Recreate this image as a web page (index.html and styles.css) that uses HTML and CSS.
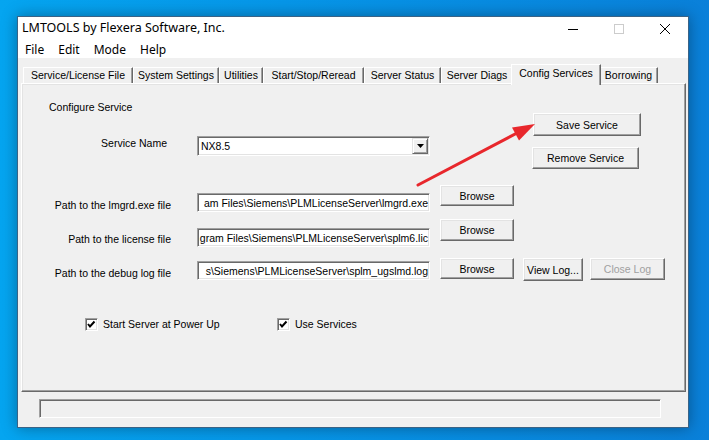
FILE: index.html
```html
<!DOCTYPE html>
<html>
<head>
<meta charset="utf-8">
<title>LMTOOLS</title>
<link rel="stylesheet" href="styles.css">
</head>
<body>
<div class="window">
  <div class="titlebar">
    <span class="title">LMTOOLS by Flexera Software, Inc.</span>
    <div class="caps">
      <span class="cap"><svg width="10" height="10" viewBox="0 0 10 10"><path d="M0 5.5H10" stroke="#000" stroke-width="1"/></svg></span>
      <span class="cap"><svg width="10" height="10" viewBox="0 0 10 10"><rect x="0.5" y="0.5" width="9" height="9" fill="none" stroke="#cccccc"/></svg></span>
      <span class="cap"><svg width="10" height="10" viewBox="0 0 10 10"><path d="M0 0L10 10M10 0L0 10" stroke="#000" stroke-width="1"/></svg></span>
    </div>
  </div>
  <div class="menubar">
    <span>File</span><span>Edit</span><span>Mode</span><span>Help</span>
  </div>
  <div class="client">
    <div class="tabs">
      <div class="tab t1">Service/License File</div>
      <div class="tab t2">System Settings</div>
      <div class="tab t3">Utilities</div>
      <div class="tab t4">Start/Stop/Reread</div>
      <div class="tab t5">Server Status</div>
      <div class="tab t6">Server Diags</div>
      <div class="tab sel">Config Services</div>
      <div class="tab t8">Borrowing</div>
    </div>
    <div class="panel">
      <div class="top">
        <div class="top-left">
          <div class="heading">Configure Service</div>
          <div class="svc-row">
            <span class="svc-label">Service Name</span>
            <div class="combo">
              <span class="combo-text">NX8.5</span>
              <span class="drop"><svg width="7" height="4" viewBox="0 0 7 4"><path d="M0 0H7L3.5 4Z" fill="#000"/></svg></span>
            </div>
          </div>
        </div>
        <div class="top-right">
          <div class="btn save">Save Service</div>
          <div class="btn remove">Remove Service</div>
        </div>
      </div>

      <div class="row r1">
        <span class="label">Path to the lmgrd.exe file</span>
        <div class="field"><span>am Files\Siemens\PLMLicenseServer\lmgrd.exe</span></div>
        <div class="btn browse">Browse</div>
      </div>
      <div class="row r2">
        <span class="label">Path to the license file</span>
        <div class="field"><span>gram Files\Siemens\PLMLicenseServer\splm6.lic</span></div>
        <div class="btn browse">Browse</div>
      </div>
      <div class="row r3">
        <span class="label">Path to the debug log file</span>
        <div class="field"><span>s\Siemens\PLMLicenseServer\splm_ugslmd.log</span></div>
        <div class="btn browse">Browse</div>
        <div class="btn viewlog">View Log...</div>
        <div class="btn closelog">Close Log</div>
      </div>

      <div class="checks">
        <div class="check c1">
          <span class="box"><svg width="13" height="13" viewBox="0 0 13 13"><path d="M3 6L5 8.5L9.5 3.5" fill="none" stroke="#000" stroke-width="2"/></svg></span>
          <span class="check-label">Start Server at Power Up</span>
        </div>
        <div class="check">
          <span class="box"><svg width="13" height="13" viewBox="0 0 13 13"><path d="M3 6L5 8.5L9.5 3.5" fill="none" stroke="#000" stroke-width="2"/></svg></span>
          <span class="check-label">Use Services</span>
        </div>
      </div>
    </div>
    <div class="statusbar"></div>
  </div>
</div>
<svg class="arrow" width="709" height="440" viewBox="0 0 709 440">
  <path d="M418 185L519 132" stroke="#e8272c" stroke-width="3" stroke-linecap="round"/>
  <polygon points="535,124 512,127.5 519,140.5" fill="#e8272c"/>
</svg>
</body>
</html>
```

FILE: styles.css
```css
* { box-sizing: border-box; }

body {
  margin: 0;
  width: 709px;
  height: 440px;
  overflow: hidden;
  position: relative;
  background: linear-gradient(90deg, #05a5f0 0%, #0696e8 40%, #0a80d9 100%);
  font-family: "Liberation Sans", Arial, sans-serif;
  font-size: 10.5px;
  color: #000;
}

.window {
  margin: 16px 0 0 17px;
  width: 672px;
  height: 412px;
  border: 1px solid #3a6386;
  background: #f0f0f0;
  box-shadow: 0 0 14px rgba(0, 0, 0, 0.35);
  display: flex;
  flex-direction: column;
}

.titlebar {
  height: 23px;
  background: #fff;
  display: flex;
  align-items: center;
  font-family: "Noto Sans", "Open Sans", sans-serif;
  font-size: 12px;
}

.title {
  padding-left: 4px;
  padding-bottom: 2px;
  font-size: 12.5px;
}

.caps {
  margin-left: auto;
  display: flex;
}

.cap {
  width: 46px;
  height: 23px;
  display: flex;
  align-items: center;
  justify-content: center;
}

.menubar {
  height: 18px;
  background: #fff;
  display: flex;
  align-items: center;
  font-family: "Noto Sans", "Open Sans", sans-serif;
  font-size: 12px;
}

.menubar span {
  padding: 0 7px;
}

.client {
  flex: 1;
  display: flex;
  flex-direction: column;
  padding: 6px 2px 0 3px;
}

.tabs {
  display: flex;
  align-items: flex-end;
  height: 19px;
  padding-left: 2px;
  position: relative;
  z-index: 1;
}

.tab {
  height: 16px;
  border-top: 1px solid #fff;
  border-left: 1px solid #fff;
  border-right: 1px solid #696969;
  box-shadow: inset -1px 0 #a0a0a0;
  text-align: center;
  line-height: 15px;
  white-space: nowrap;
  background: #f0f0f0;
}

.t1 { width: 110px; }
.t2 { width: 86px; }
.t3 { width: 44px; }
.t4 { width: 101px; }
.t5 { width: 77px; }
.t6 { width: 72px; }
.t8 { width: 59px; }

.tab.sel {
  width: 90px;
  height: 21px;
  margin: 0 -2px -2px;
  line-height: 16px;
  position: relative;
  z-index: 2;
}

.panel {
  height: 309px;
  border-top: 1px solid #fff;
  border-left: 1px solid #fff;
  border-right: 1px solid #696969;
  border-bottom: 1px solid #696969;
  box-shadow: inset -1px -1px #a0a0a0, inset 1px 1px #e3e3e3;
}

.top {
  display: flex;
}

.top-left {
  width: 408px;
}

.heading {
  margin: 17px 0 0 27px;
  line-height: 13px;
}

.svc-row {
  display: flex;
  margin-top: 22px;
}

.svc-label {
  width: 145px;
  text-align: right;
  margin-top: 1px;
  line-height: 13px;
}

.combo {
  margin-left: 30px;
  width: 233px;
  height: 20px;
  background: #fff;
  border-top: 1px solid #a0a0a0;
  border-left: 1px solid #a0a0a0;
  border-bottom: 1px solid #fff;
  border-right: 1px solid #fff;
  box-shadow: inset 1px 1px #696969, inset -1px -1px #e3e3e3;
  display: flex;
  align-items: center;
  padding: 1px 1px 1px 2px;
}

.combo-text {
  flex: 1;
  padding-left: 1px;
  line-height: 13px;
  margin-top: 1px;
}

.drop {
  width: 16px;
  height: 16px;
  background: #f0f0f0;
  border-top: 1px solid #e3e3e3;
  border-left: 1px solid #e3e3e3;
  border-right: 1px solid #696969;
  border-bottom: 1px solid #696969;
  box-shadow: inset 1px 1px #fff, inset -1px -1px #a0a0a0;
  display: flex;
  align-items: center;
  justify-content: center;
}

.top-right {
  margin-left: 103px;
  padding-top: 29px;
  display: flex;
  flex-direction: column;
  align-items: flex-start;
}

.btn {
  background: #f0f0f0;
  border-top: 1px solid #fff;
  border-left: 1px solid #fff;
  border-right: 1px solid #696969;
  border-bottom: 1px solid #696969;
  box-shadow: inset -1px -1px #a0a0a0, inset 1px 1px #e3e3e3;
  display: flex;
  align-items: center;
  justify-content: center;
  white-space: nowrap;
  flex-shrink: 0;
}

.save { width: 108px; height: 23px; }
.remove { width: 107px; height: 22px; margin: 11px 0 0 -1px; }

.row {
  display: flex;
  align-items: flex-start;
}

.label {
  width: 149px;
  text-align: right;
  line-height: 13px;
  flex-shrink: 0;
}

.field {
  margin-left: 26px;
  width: 233px;
  height: 19px;
  flex-shrink: 0;
  background: #fff;
  border-top: 1px solid #a0a0a0;
  border-left: 1px solid #a0a0a0;
  border-bottom: 1px solid #fff;
  border-right: 1px solid #fff;
  box-shadow: inset 1px 1px #696969, inset -1px -1px #e3e3e3;
  display: flex;
  justify-content: flex-end;
  align-items: center;
  overflow: hidden;
  white-space: nowrap;
  padding: 1px 1px 0 2px;
}

.field span {
  flex-shrink: 0;
  line-height: 13px;
}

.browse {
  margin-left: 10px;
  width: 74px;
  height: 21px;
}

.r1 { margin-top: 16px; }
.r1 .label { margin-top: 14px; }
.r1 .field { margin-top: 8px; }

.r2 { margin-top: 7px; }
.r2 .label { margin-top: 14px; }
.r2 .field { margin-top: 9px; }
.r2 .browse { height: 22px; }

.r3 { margin-top: 11px; }
.r3 .label { margin-top: 9px; }
.r3 .field { margin-top: 3px; }

.viewlog {
  margin-left: 9px;
  width: 60px;
  height: 23px;
}

.closelog {
  margin-left: 7px;
  width: 75px;
  height: 22px;
  color: #a0a0a0;
}

.checks {
  display: flex;
  align-items: center;
  margin: 37px 0 0 63px;
}

.check {
  display: flex;
  align-items: center;
}

.check.c1 {
  width: 192px;
}

.box {
  width: 13px;
  height: 13px;
  background: #fff;
  border-top: 1px solid #a0a0a0;
  border-left: 1px solid #a0a0a0;
  border-bottom: 1px solid #fff;
  border-right: 1px solid #fff;
  box-shadow: inset 1px 1px #696969, inset -1px -1px #e3e3e3;
  position: relative;
  overflow: hidden;
}

.box svg {
  position: absolute;
  left: -1px;
  top: -1px;
}

.check-label {
  margin-left: 5px;
  line-height: 13px;
}

.statusbar {
  margin: 7px 0 0 18px;
  width: 622px;
  height: 19px;
  border-top: 1px solid #a0a0a0;
  border-left: 1px solid #a0a0a0;
  border-bottom: 1px solid #fff;
  border-right: 1px solid #fff;
  box-shadow: inset 1px 1px #696969;
}

.arrow {
  position: absolute;
  left: 0;
  top: 0;
  pointer-events: none;
}
```
